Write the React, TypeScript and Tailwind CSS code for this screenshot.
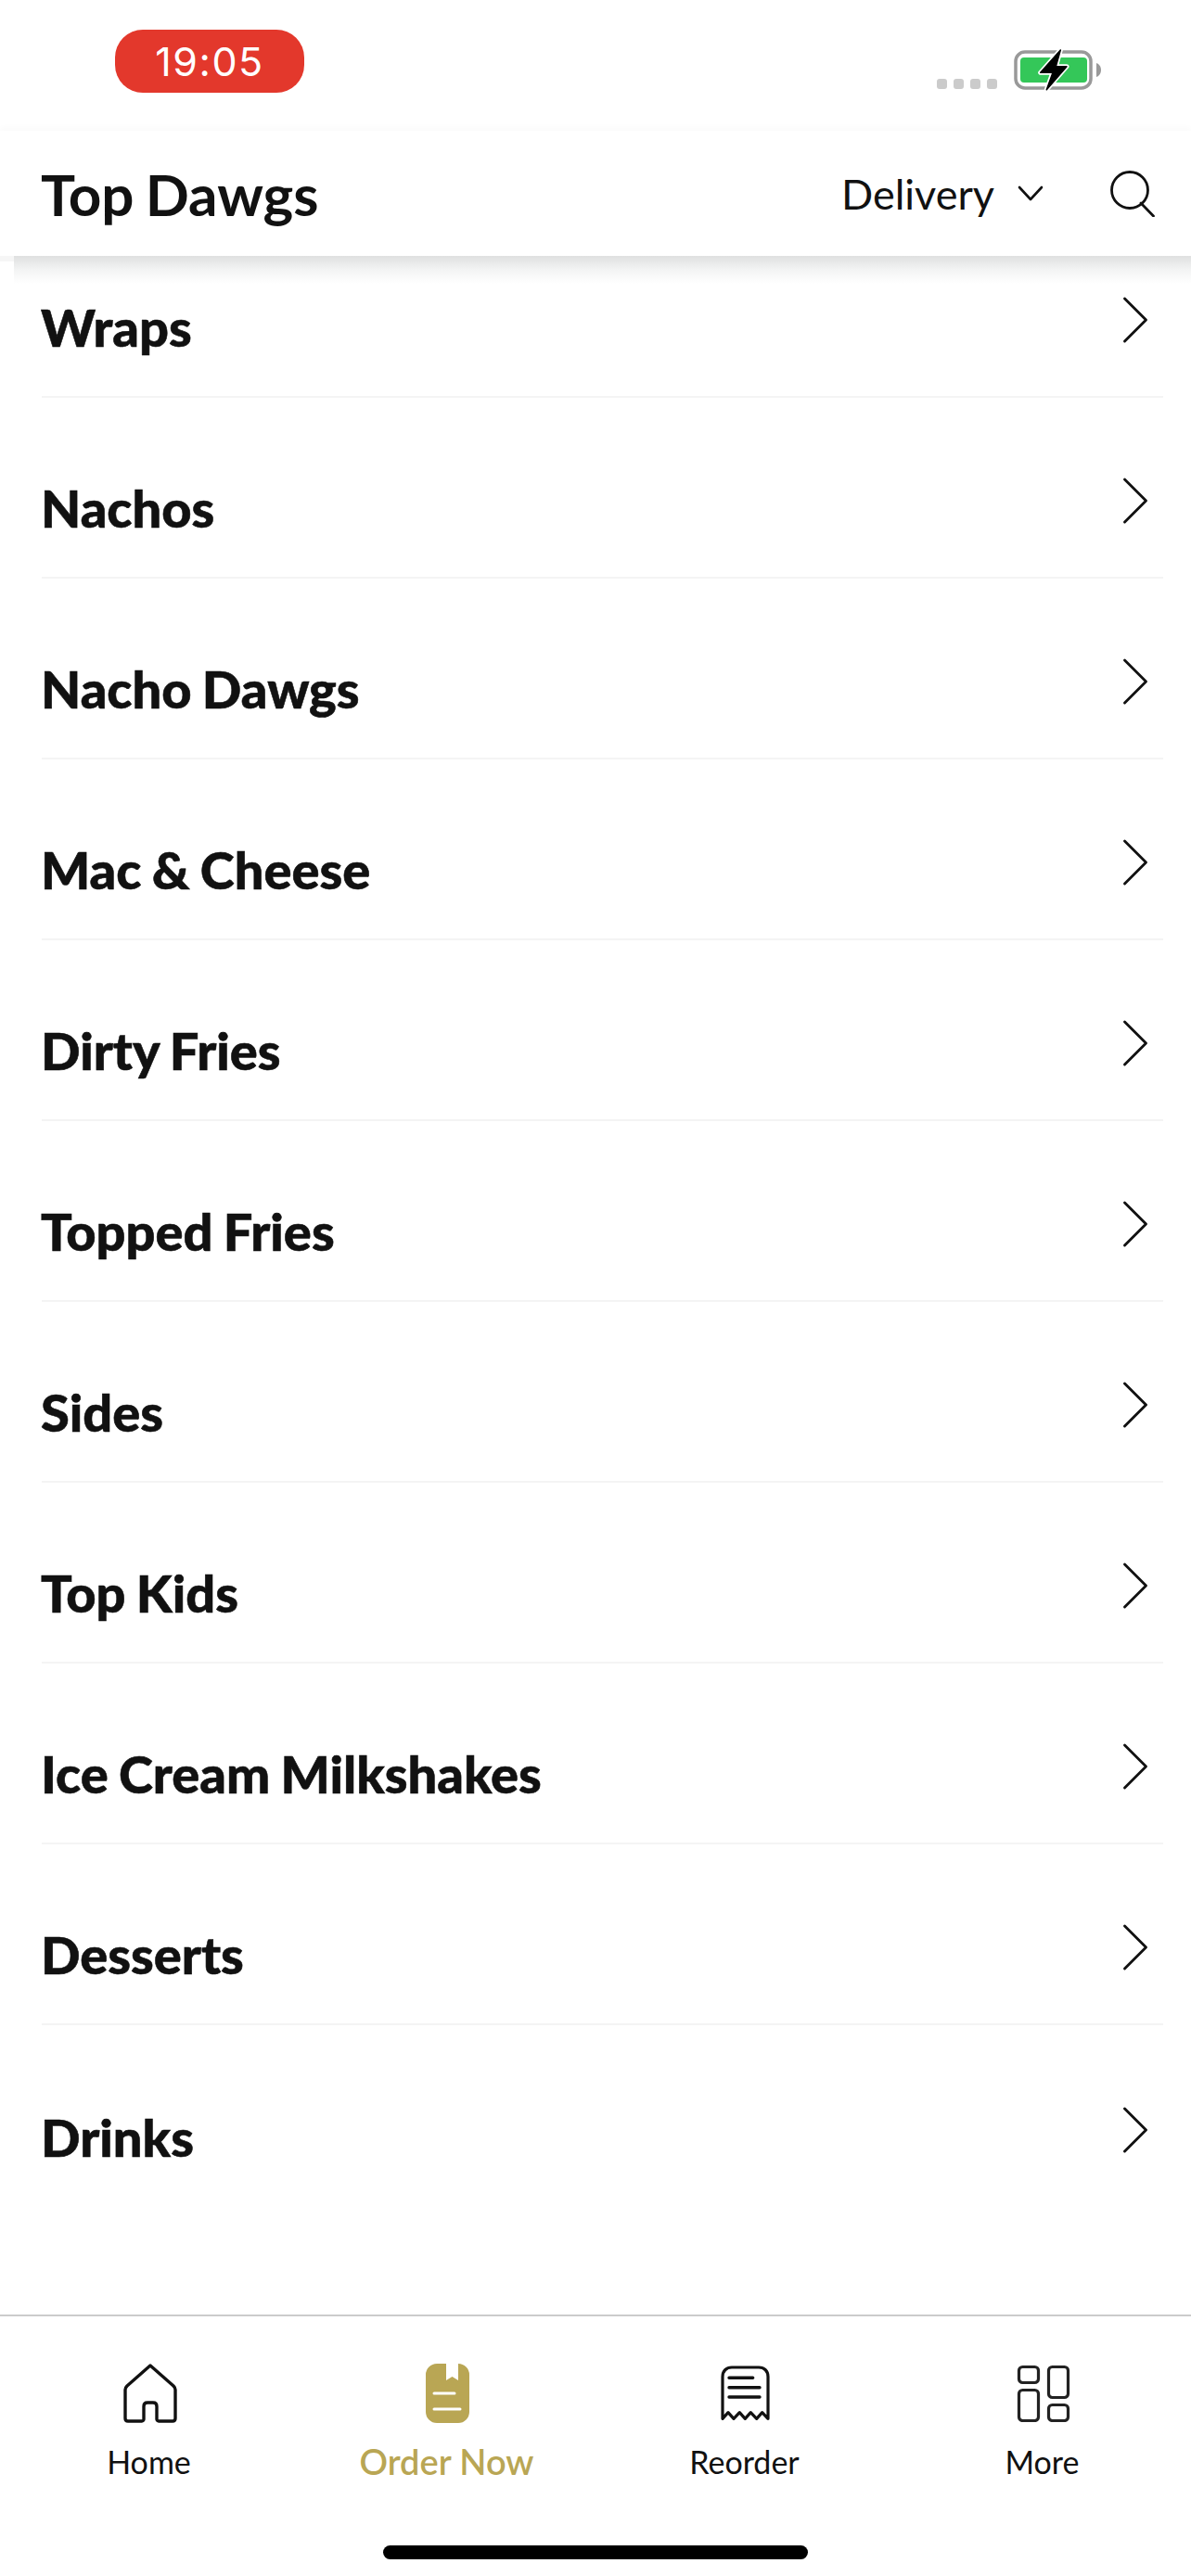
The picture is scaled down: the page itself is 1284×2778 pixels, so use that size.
import { ChevronRight } from 'lucide-react';

const categories = [
  'Wraps',
  'Nachos',
  'Nacho Dawgs',
  'Mac & Cheese',
  'Dirty Fries',
  'Topped Fries',
  'Sides',
  'Top Kids',
  'Ice Cream Milkshakes',
  'Desserts',
  'Drinks',
];

function BatteryIcon() {
  return (
    <svg width="96" height="47" viewBox="0 0 96 47" className="ml-[18px]">
      <rect x="2" y="4" width="81" height="39" rx="10" fill="#fff" stroke="#999" strokeWidth="3.5" />
      <rect x="7" y="10" width="72" height="27" rx="4" fill="#34c759" />
      <path d="M89 16c3 1 5 4 5 7.500s-2 6.500-5 7.500z" fill="#999" />
      <path
        d="M50.300 2 28.700 26.300H42L35.300 44.700 57 19.700H45.300z"
        fill="#000"
        stroke="#fff"
        strokeWidth="5"
        strokeLinejoin="round"
        paintOrder="stroke"
      />
      <path d="M50.300 2 28.700 26.300H42L35.300 44.700 57 19.700H45.300z" fill="#000" stroke="#000" strokeWidth="1.500" strokeLinejoin="round" />
    </svg>
  );
}

function DownIcon() {
  return (
    <svg width="30" height="20" viewBox="0 0 30 20" fill="none" stroke="#111" strokeWidth="2.6" strokeLinecap="round" strokeLinejoin="round">
      <path d="M3 3 15 16 27 3" />
    </svg>
  );
}

function SearchIcon() {
  return (
    <svg width="48" height="50" viewBox="0 0 48 50" fill="none" stroke="#111" strokeWidth="2.8">
      <circle cx="21" cy="21" r="19.500" />
      <path d="M33 35 46.500 49" strokeLinecap="round" />
    </svg>
  );
}

function HomeIcon() {
  return (
    <svg width="58" height="64" viewBox="0 0 58 64" fill="none" stroke="#111" strokeWidth="3.400" strokeLinejoin="round" className="ml-[3px]">
      <path d="M29 2 4 24c-1 1-2 2-2 4v31c0 2 1 3 3 3h15c1 0 2-1 2-2V46c0-3 2-4 4-4h6c2 0 4 1 4 4v14c0 1 1 2 2 2h15c2 0 3-1 3-3V28c0-2-1-3-2-4z" />
    </svg>
  );
}

function OrderIcon() {
  return (
    <svg width="47" height="64" viewBox="0 0 47 64" className="ml-[2px]">
      <path
        d="M12 0H22V18L28.500 14 35 18V0A12 12 0 0 1 47 12V52A12 12 0 0 1 35 64H12A12 12 0 0 1 0 52V12A12 12 0 0 1 12 0Z"
        fill="#b9a654"
      />
      <path d="M9 32H31M9 49H37" stroke="#fff" strokeWidth="3" strokeLinecap="round" />
    </svg>
  );
}

function ReorderIcon() {
  return (
    <svg width="55" height="59" viewBox="-1 0 55 59" fill="none" stroke="#111" strokeWidth="3.200" strokeLinejoin="round">
      <path d="M3 57.300V12C3 6 7 2 13 2H42C48 2 52 6 52 12V57.300L45.700 50.700 39.700 57.300 33.300 50.700 27.300 57.300 21.300 50.700 15 57.300 9 50.700z" />
      <path d="M10 13.300H35.700M10 23.700H43M10 34H43" strokeLinecap="round" strokeWidth="3.400" />
    </svg>
  );
}

function MoreIcon() {
  return (
    <svg width="58" height="62" viewBox="0 0 58 62" fill="none" stroke="#222" strokeWidth="3.200" className="ml-[3px]">
      <rect x="2.500" y="2.500" width="21" height="17" rx="4" />
      <rect x="34.500" y="2.500" width="21" height="33" rx="4" />
      <rect x="2.500" y="27.500" width="21" height="33" rx="4" />
      <rect x="34.500" y="43.500" width="21" height="17" rx="4" />
    </svg>
  );
}

const tabs = [
  { label: 'Home', icon: <HomeIcon /> },
  { label: 'Order Now', icon: <OrderIcon />, active: true },
  { label: 'Reorder', icon: <ReorderIcon /> },
  { label: 'More', icon: <MoreIcon /> },
];

export default function App() {
  return (
    <div className="flex h-[2778px] w-[1284px] flex-col overflow-hidden bg-white font-['Lato',sans-serif] text-[#111]">
      {/* Status bar */}
      <div className="flex h-[141px] shrink-0 items-start justify-between pl-[124px] pr-[95px] pt-[32px]">
        <div className="flex h-[68px] w-[204px] items-center justify-center rounded-[30px] bg-[#e3382c] font-['Inter',sans-serif] text-[43px] tracking-[1.5px] text-white">
          19:05
        </div>
        <div className="flex h-[67px] items-end">
          <div className="mb-[3px] flex gap-[7px]">
            <span className="h-[11px] w-[11px] rounded-[3px] bg-[#cbcbcb]" />
            <span className="h-[11px] w-[11px] rounded-[3px] bg-[#cbcbcb]" />
            <span className="h-[11px] w-[11px] rounded-[3px] bg-[#cbcbcb]" />
            <span className="h-[11px] w-[11px] rounded-[3px] bg-[#cbcbcb]" />
          </div>
          <BatteryIcon />
        </div>
      </div>

      {/* Header */}
      <header className="relative z-10 flex h-[141px] shrink-0 items-center justify-between border-b-[6px] border-[#f6f6f6] bg-white pl-[44px] pr-[39px] shadow-[0_-4px_6px_rgba(0,0,0,0.02)]">
        <h1 className="text-[62px] font-bold leading-none [word-spacing:-3px]">Top Dawgs</h1>
        <div className="flex items-center">
          <span className="mt-[2px] text-[45px] leading-none">Delivery</span>
          <span className="ml-[24px] mr-[71px]">
            <DownIcon />
          </span>
          <SearchIcon />
        </div>
        <div className="absolute left-[15px] right-0 top-full h-[30px] bg-gradient-to-b from-[#dfe0e0] via-[#f3f4f4] to-white/0" />
      </header>

      {/* Category list */}
      <ul className="-mt-[48px] flex-1 pl-[45px] pr-[30px]">
        {categories.map((name, i) => (
          <li
            key={name}
            className={`flex h-[195px] items-end justify-between ${i < categories.length - 1 ? 'border-b-2 border-[#f4f4f4]' : ''}`}
          >
            <span className="-ml-[1px] mb-[40px] text-[56px] font-black leading-[68px] [-webkit-text-stroke:0.6px_#111] [word-spacing:-2px]">{name}</span>
            <ChevronRight className="mb-[36px] -mr-[16px] h-[92px] w-[92px]" strokeWidth={0.75} />
          </li>
        ))}
      </ul>

      {/* Tab bar */}
      <nav className="h-[282px] shrink-0 border-t-2 border-[#cccccc] pt-[50px]">
        <div className="grid grid-cols-4">
          {tabs.map((tab) => (
            <div key={tab.label} className="flex flex-col items-center">
              <div className="flex h-[65px] items-center">{tab.icon}</div>
              <span className={tab.active ? 'mt-[17px] text-[38px] font-semibold leading-[48px] text-[#b9a654]' : 'mt-[18px] text-[34px] leading-[48px]'}>
                {tab.label}
              </span>
            </div>
          ))}
        </div>
        <div className="mx-auto mt-[66px] h-[15px] w-[458px] rounded-full bg-black" />
      </nav>
    </div>
  );
}
